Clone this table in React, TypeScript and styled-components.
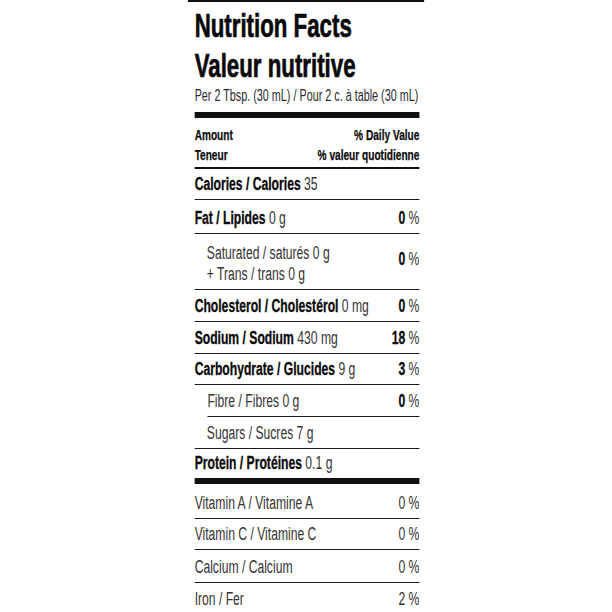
import React from "react";
import styled, { createGlobalStyle } from "styled-components";

const GlobalStyle = createGlobalStyle`
  html, body { margin: 0; padding: 0; background: #ffffff; }
  body { font-family: "Liberation Sans", Arial, sans-serif; color: #111; }
`;

/* The label is set in a regular-width face and condensed as a whole,
   like Helvetica Condensed on the printed panel. */
const Label = styled.section`
  width: 350px;
  margin: 0 auto;
  box-sizing: border-box;
  border-top: 2px solid #111;
  padding: 0 7px 0 10px;
  transform: scaleX(0.675);
  transform-origin: center top;
`;

const Title = styled.h1`
  margin: 0;
  padding-top: 4px;
  font-size: 33px;
  line-height: 40px;
  font-weight: 700;
  color: #0a0a0a;
  -webkit-text-stroke: 0.7px #0a0a0a;
`;

const Serving = styled.div`
  font-size: 16px;
  line-height: 20px;
  color: #2a2a2a;
  white-space: nowrap;
`;

const ThickRule = styled.div<{ $top?: number }>`
  height: 6px;
  background: #111;
  margin-top: ${(p) => p.$top ?? 0}px;
`;

const HeaderGrid = styled.div`
  display: grid;
  grid-template-columns: auto auto;
  justify-content: space-between;
  padding: 7px 0 2px;
  font-size: 15px;
  line-height: 20px;
  font-weight: 700;
  color: #0a0a0a;
  -webkit-text-stroke: 0.25px #0a0a0a;
  border-bottom: 2px solid #111;
  & > :nth-child(even) { text-align: right; }
`;

const Row = styled.div<{ $height?: number; $indent?: boolean; $inset?: boolean; $heavy?: boolean }>`
  display: flex;
  justify-content: space-between;
  align-items: flex-end;
  box-sizing: border-box;
  height: ${(p) => p.$height ?? 32}px;
  padding-left: ${(p) => (p.$indent ? 18 : 0)}px;
  padding-bottom: 4px;
  margin-left: ${(p) => (p.$inset ? 19 : 0)}px;
  border-bottom: ${(p) => (p.$heavy ? "6px solid #111" : "1px solid #1c1c1c")};
  font-size: 18px;
  line-height: 21px;
`;

const Name = styled.div`
  display: flex;
  flex-direction: column;
  white-space: nowrap;
`;

const Bold = styled.span`
  font-weight: 700;
  color: #0a0a0a;
  -webkit-text-stroke: 0.3px #0a0a0a;
`;

const Light = styled.span`
  font-weight: 400;
  color: #333;
`;

const Percent = styled.div<{ $mid?: boolean }>`
  white-space: nowrap;
  align-self: ${(p) => (p.$mid ? "center" : "auto")};
`;

type Item = {
  label?: string;
  lines?: string[];
  amount?: string;
  pct?: string;
  pctBold?: boolean;
  indent?: boolean;
  inset?: boolean;
  height?: number;
  heavy?: boolean;
  lightLabel?: boolean;
};

const items: Item[] = [
  { label: "Calories / Calories", amount: "35", height: 31 },
  { label: "Fat / Lipides", amount: "0 g", pct: "0", pctBold: true, height: 34 },
  { lines: ["Saturated / saturés 0 g", "+ Trans / trans 0 g"], pct: "0", pctBold: true, indent: true, height: 56 },
  { label: "Cholesterol / Cholestérol", amount: "0 mg", pct: "0", pctBold: true },
  { label: "Sodium / Sodium", amount: "430 mg", pct: "18", pctBold: true },
  { label: "Carbohydrate / Glucides", amount: "9 g", pct: "3", pctBold: true, height: 31 },
  { label: "Fibre / Fibres 0 g", lightLabel: true, pct: "0", pctBold: true, inset: true },
  { label: "Sugars / Sucres 7 g", lightLabel: true, indent: true },
  { label: "Protein / Protéines", amount: "0.1 g", heavy: true, height: 35 },
  { label: "Vitamin A / Vitamine A", lightLabel: true, pct: "0", height: 35 },
  { label: "Vitamin C / Vitamine C", lightLabel: true, pct: "0", height: 31 },
  { label: "Calcium / Calcium", lightLabel: true, pct: "0", height: 33 },
  { label: "Iron / Fer", lightLabel: true, pct: "2" },
];

export default function App() {
  return (
    <>
      <GlobalStyle />
      <Label>
        <Title>
          Nutrition Facts
          <br />
          Valeur nutritive
        </Title>
        <Serving>Per 2 Tbsp. (30 mL) / Pour 2 c. à table (30 mL)</Serving>
        <ThickRule $top={6} />
        <HeaderGrid>
          <span>Amount</span>
          <span>% Daily Value</span>
          <span>Teneur</span>
          <span>% valeur quotidienne</span>
        </HeaderGrid>
        {items.map((it, i) => (
          <Row key={i} $height={it.height} $indent={it.indent} $inset={it.inset} $heavy={it.heavy}>
            <Name>
              {it.lines ? (
                it.lines.map((l) => <Light key={l}>{l}</Light>)
              ) : it.lightLabel ? (
                <Light>{it.label}</Light>
              ) : (
                <span>
                  <Bold>{it.label}</Bold> <Light>{it.amount}</Light>
                </span>
              )}
            </Name>
            {it.pct !== undefined && (
              <Percent $mid={!!it.lines}>
                {it.pctBold ? <Bold>{it.pct}</Bold> : <Light>{it.pct}</Light>} <Light>%</Light>
              </Percent>
            )}
          </Row>
        ))}
      </Label>
    </>
  );
}
